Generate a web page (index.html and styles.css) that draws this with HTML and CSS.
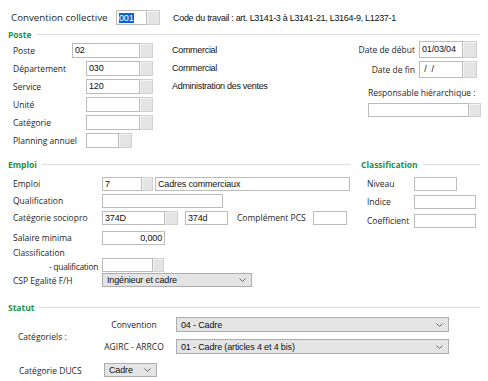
FILE: index.html
```html
<!DOCTYPE html>
<html>
<head>
    <title>Salarié - Poste</title>
    <link rel="stylesheet" href="styles.css">
</head>
<body>
    <div class="top">
        <span class="lbl w105 big">Convention collective</span>
        <span class="field"><span class="box b31"><span class="hl">001</span></span><span class="btn"></span></span>
        <span class="val note">Code du travail : art. L3141-3 à L3141-21, L3164-9, L1237-1</span>
    </div>

    <div class="sec sec-poste">Poste</div>
    <div class="poste">
        <div class="col-left">
            <div class="row"><span class="lbl w59">Poste</span><span class="field"><span class="box b68">02</span><span class="btn"></span></span></div>
            <div class="row"><span class="lbl w73">Département</span><span class="field"><span class="box b54">030</span><span class="btn"></span></span></div>
            <div class="row"><span class="lbl w73">Service</span><span class="field"><span class="box b54">120</span><span class="btn"></span></span></div>
            <div class="row"><span class="lbl w73">Unité</span><span class="field"><span class="box b54"></span><span class="btn"></span></span></div>
            <div class="row"><span class="lbl w73">Catégorie</span><span class="field"><span class="box b54"></span><span class="btn"></span></span></div>
            <div class="row"><span class="lbl w73">Planning annuel</span><span class="field"><span class="box b33"></span><span class="btn"></span></span></div>
        </div>
        <div class="col-mid">
            <div class="row val">Commercial</div>
            <div class="row val">Commercial</div>
            <div class="row val">Administration des ventes</div>
        </div>
        <div class="col-right">
            <div class="date-row"><span class="lbl">Date de début</span><span class="field tall"><span class="box b44">01/03/04</span><span class="btn b14"></span></span></div>
            <div class="date-row second"><span class="lbl">Date de fin</span><span class="field tall"><span class="box b44">&nbsp;/ &nbsp;/</span><span class="btn b14"></span></span></div>
            <div class="resp">
                <div class="lbl resp-lbl">Responsable hiérarchique :</div>
                <span class="field resp-field"><span class="box grow"></span><span class="btn"></span></span>
            </div>
        </div>
    </div>

    <div class="emploi">
        <div class="emp-left">
            <div class="sec">Emploi</div>
            <div class="erow first"><span class="lbl w89">Emploi</span><span class="field sm"><span class="box b40">7</span><span class="btn b11"></span></span><span class="box sm b195 gap2">Cadres commerciaux</span></div>
            <div class="erow"><span class="lbl w89">Qualification</span><span class="box sm b121"></span></div>
            <div class="erow"><span class="lbl w89">Catégorie sociopro</span><span class="field sm"><span class="box b63">374D</span><span class="btn"></span></span><span class="box sm b43 gap7">374d</span><span class="lbl pcs">Complément PCS</span><span class="box sm b34"></span></div>
            <div class="erow salaire"><span class="lbl w89">Salaire minima</span><span class="box sm b63 right">0,000</span></div>
            <div class="erow classif"><span class="lbl w89 two">Classification<br><span class="indent">- qualification</span></span><span class="field sm bottom"><span class="box b51"></span><span class="btn b11"></span></span></div>
            <div class="erow csp"><span class="lbl w89">CSP Egalité F/H</span><span class="select s150">Ingénieur et cadre<svg width="7" height="4" viewBox="0 0 7 4"><polyline points="0.5,0.5 3.5,3.5 6.5,0.5" fill="none" stroke="#666" stroke-width="1"/></svg></span></div>
        </div>
        <div class="emp-right">
            <div class="sec nopad">Classification</div>
            <div class="crow first"><span class="lbl w47">Niveau</span><span class="box sm b43"></span></div>
            <div class="crow tallrow"><span class="lbl w47">Indice</span><span class="box sm b62"></span></div>
            <div class="crow tallrow"><span class="lbl w47">Coefficient</span><span class="box sm b62"></span></div>
        </div>
    </div>

    <div class="sec sec-statut">Statut</div>
    <div class="statut">
        <div class="cat-lbl lbl">Catégoriels :</div>
        <div class="cat-grid">
            <span class="lbl center">Convention</span>
            <span class="select s273">04 - Cadre<svg width="7" height="4" viewBox="0 0 7 4"><polyline points="0.5,0.5 3.5,3.5 6.5,0.5" fill="none" stroke="#666" stroke-width="1"/></svg></span>
            <span class="lbl center">AGIRC - ARRCO</span>
            <span class="select s273">01 - Cadre (articles 4 et 4 bis)<svg width="7" height="4" viewBox="0 0 7 4"><polyline points="0.5,0.5 3.5,3.5 6.5,0.5" fill="none" stroke="#666" stroke-width="1"/></svg></span>
        </div>
    </div>
    <div class="ducs">
        <span class="lbl w85">Catégorie DUCS</span>
        <span class="select s53">Cadre<svg width="7" height="4" viewBox="0 0 7 4"><polyline points="0.5,0.5 3.5,3.5 6.5,0.5" fill="none" stroke="#666" stroke-width="1"/></svg></span>
    </div>
</body>
</html>
```

FILE: styles.css
```css
* {
    box-sizing: border-box;
}
body {
    margin: 0;
    width: 488px;
    height: 381px;
    overflow: hidden;
    background-color: #ffffff;
    font-family: "Open Sans", sans-serif;
    font-size: 8.5px;
    color: #262626;
}
.val, .box, .select {
    font-family: "Liberation Sans", Arial, sans-serif;
    font-size: 9px;
    color: #111;
}
.val {
    letter-spacing: -0.3px;
}
.box, .select {
    letter-spacing: -0.15px;
}
.lbl {
    white-space: nowrap;
}
.lbl.big {
    font-size: 9.75px;
}

/* champs */
.field {
    display: flex;
    height: 15px;
}
.field.tall {
    height: 17px;
}
.field.sm {
    height: 14px;
}
.box {
    display: flex;
    align-items: center;
    height: 100%;
    padding: 0 2px;
    background-color: #ffffff;
    border: 1px solid #bcbcbc;
    white-space: nowrap;
    overflow: hidden;
}
.box.sm {
    height: 14px;
}
.box.right {
    justify-content: flex-end;
}
.box.grow {
    flex: 1;
}
.btn {
    width: 13px;
    height: 100%;
    background-color: #e4e4e4;
    border: 1px solid #d0d0d0;
    border-left: none;
    box-shadow: inset 1px 1px 0 #f3f3f3;
}
.hl {
    background-color: #0a64d2;
    color: #ffffff;
    line-height: 10px;
}
.select {
    display: flex;
    align-items: center;
    justify-content: space-between;
    height: 14px;
    padding: 0 5px 0 4px;
    background-color: #e4e4e4;
    border: 1px solid #adadad;
    white-space: nowrap;
}
.select.s273 {
    height: 15px;
}

/* largeurs */
.w47 { width: 47px; }
.w59 { width: 59px; }
.w73 { width: 73px; }
.w85 { width: 85px; }
.w89 { width: 89px; }
.w105 { width: 105px; }
.b31 { width: 31px; }
.b33 { width: 33px; }
.b34 { width: 34px; }
.b40 { width: 40px; }
.b43 { width: 43px; }
.b44 { width: 44px; }
.b51 { width: 51px; }
.b54 { width: 54px; }
.b62 { width: 62px; }
.b63 { width: 63px; }
.b68 { width: 68px; }
.b121 { width: 121px; }
.b195 { width: 195px; }
.btn.b11 { width: 11px; }
.btn.b14 { width: 14px; }
.s53 { width: 53px; }
.s150 { width: 150px; }
.s273 { width: 273px; }
.gap2 { margin-left: 2px; }
.gap7 { margin-left: 7px; }

/* en-tete */
.top {
    display: flex;
    align-items: center;
    height: 15px;
    margin-top: 10px;
    padding-left: 11px;
}
.note {
    margin-left: 13px;
}

/* titres de section */
.sec {
    display: flex;
    align-items: center;
    height: 12px;
    padding-left: 8px;
    color: #20924a;
    font-weight: bold;
}
.sec::after {
    content: "";
    flex: 1;
    height: 1px;
    margin-left: 5px;
    background-color: #dcdcdc;
}
.sec.nopad {
    padding-left: 0;
}
.sec-poste {
    margin-top: 3px;
    margin-right: 8px;
}
.sec-statut {
    margin-top: 14px;
    margin-right: 8px;
}

/* poste */
.poste {
    display: flex;
    height: 109px;
    padding-left: 13px;
}
.col-left {
    width: 140px;
    padding-top: 1px;
}
.row {
    display: flex;
    align-items: center;
    height: 18px;
}
.col-mid {
    width: 150px;
    margin-left: 19px;
    padding-top: 1px;
}
.col-right {
    width: 159px;
}
.date-row {
    display: flex;
    align-items: center;
    justify-content: flex-end;
    height: 18px;
    padding-right: 4px;
}
.date-row.second {
    margin-top: 2px;
}
.date-row .field {
    margin-left: 4px;
}
.resp {
    width: 113px;
    margin-left: auto;
}
.resp-lbl {
    height: 10px;
    line-height: 10px;
    margin-top: 10px;
}
.resp-field {
    height: 14px;
    margin-top: 5px;
}
.resp-field .btn {
    width: 12px;
}

/* emploi */
.emploi {
    display: flex;
    margin-top: 9px;
}
.emp-left {
    width: 350px;
}
.emp-right {
    width: 119px;
    margin-left: 11px;
}
.erow {
    display: flex;
    align-items: center;
    height: 17px;
    padding-left: 13px;
}
.erow.first, .crow.first {
    margin-top: 5px;
}
.pcs {
    width: 76px;
    margin-left: 9px;
}
.erow.salaire {
    margin-top: 3px;
}
.erow.classif {
    align-items: flex-start;
    height: 27px;
    margin-top: 0;
}
.two {
    line-height: 14px;
}
.indent {
    padding-left: 36px;
    letter-spacing: -0.3px;
}
.field.bottom {
    align-self: flex-end;
    margin-bottom: 1px;
}
.erow.csp {
    height: 14px;
}
.crow {
    display: flex;
    align-items: center;
    height: 17px;
    padding-left: 6px;
}
.crow.tallrow {
    height: 19px;
}

/* statut */
.statut {
    display: flex;
    align-items: center;
    margin-top: 3px;
    padding-left: 18px;
}
.cat-lbl {
    width: 82px;
    padding-top: 2px;
}
.cat-grid {
    display: grid;
    grid-template-columns: 68px 273px;
    grid-template-rows: 17px 17px;
    row-gap: 5px;
    column-gap: 8px;
    align-items: center;
}
.center {
    text-align: center;
}
.ducs {
    display: flex;
    align-items: center;
    height: 16px;
    margin-top: 7px;
    padding-left: 19px;
}
```
